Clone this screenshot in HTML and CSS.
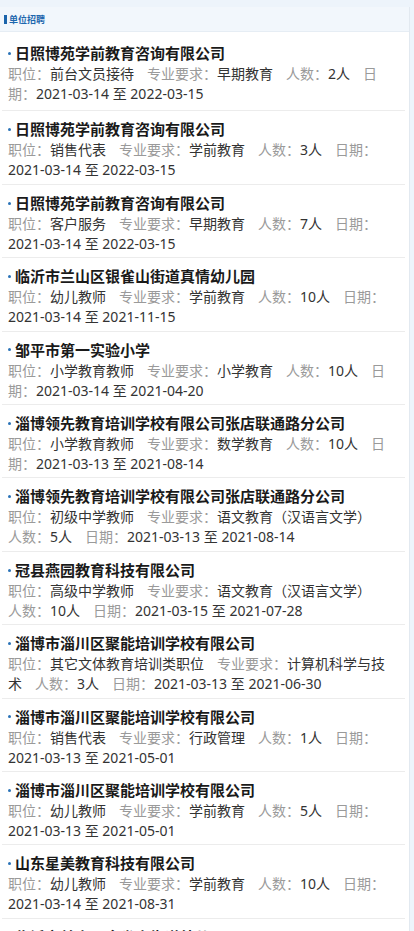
FILE: index.html
```html
<!DOCTYPE html>
<html lang="zh-CN">
<head>
    <meta charset="UTF-8">
    <meta name="viewport" content="width=device-width, initial-scale=1.0">
    <title>单位招聘</title>
    <link rel="stylesheet" href="styles.css">
</head>
<body>
    <div class="panel">
        <div class="panel-head"><span class="panel-title">单位招聘</span></div>
        <ul class="job-list">
            <li class="job">
                <h3 class="job-company"><i class="dot"></i>日照博苑学前教育咨询有限公司</h3>
                <p class="job-info"><span class="label">职位：</span><span class="value">前台文员接待</span><span class="label">专业要求：</span><span class="value">早期教育</span><span class="label">人数：</span><span class="value">2人</span><span class="label">日期：</span><span class="value">2021-03-14 至 2022-03-15</span></p>
            </li>
            <li class="job">
                <h3 class="job-company"><i class="dot"></i>日照博苑学前教育咨询有限公司</h3>
                <p class="job-info"><span class="label">职位：</span><span class="value">销售代表</span><span class="label">专业要求：</span><span class="value">学前教育</span><span class="label">人数：</span><span class="value">3人</span><span class="label">日期：</span><span class="value">2021-03-14 至 2022-03-15</span></p>
            </li>
            <li class="job">
                <h3 class="job-company"><i class="dot"></i>日照博苑学前教育咨询有限公司</h3>
                <p class="job-info"><span class="label">职位：</span><span class="value">客户服务</span><span class="label">专业要求：</span><span class="value">早期教育</span><span class="label">人数：</span><span class="value">7人</span><span class="label">日期：</span><span class="value">2021-03-14 至 2022-03-15</span></p>
            </li>
            <li class="job">
                <h3 class="job-company"><i class="dot"></i>临沂市兰山区银雀山街道真情幼儿园</h3>
                <p class="job-info"><span class="label">职位：</span><span class="value">幼儿教师</span><span class="label">专业要求：</span><span class="value">学前教育</span><span class="label">人数：</span><span class="value">10人</span><span class="label">日期：</span><span class="value">2021-03-14 至 2021-11-15</span></p>
            </li>
            <li class="job">
                <h3 class="job-company"><i class="dot"></i>邹平市第一实验小学</h3>
                <p class="job-info"><span class="label">职位：</span><span class="value">小学教育教师</span><span class="label">专业要求：</span><span class="value">小学教育</span><span class="label">人数：</span><span class="value">10人</span><span class="label">日期：</span><span class="value">2021-03-14 至 2021-04-20</span></p>
            </li>
            <li class="job">
                <h3 class="job-company"><i class="dot"></i>淄博领先教育培训学校有限公司张店联通路分公司</h3>
                <p class="job-info"><span class="label">职位：</span><span class="value">小学教育教师</span><span class="label">专业要求：</span><span class="value">数学教育</span><span class="label">人数：</span><span class="value">10人</span><span class="label">日期：</span><span class="value">2021-03-13 至 2021-08-14</span></p>
            </li>
            <li class="job">
                <h3 class="job-company"><i class="dot"></i>淄博领先教育培训学校有限公司张店联通路分公司</h3>
                <p class="job-info"><span class="label">职位：</span><span class="value">初级中学教师</span><span class="label">专业要求：</span><span class="value">语文教育（汉语言文学）</span><span class="label">人数：</span><span class="value">5人</span><span class="label">日期：</span><span class="value">2021-03-13 至 2021-08-14</span></p>
            </li>
            <li class="job">
                <h3 class="job-company"><i class="dot"></i>冠县燕园教育科技有限公司</h3>
                <p class="job-info"><span class="label">职位：</span><span class="value">高级中学教师</span><span class="label">专业要求：</span><span class="value">语文教育（汉语言文学）</span><span class="label">人数：</span><span class="value">10人</span><span class="label">日期：</span><span class="value">2021-03-15 至 2021-07-28</span></p>
            </li>
            <li class="job">
                <h3 class="job-company"><i class="dot"></i>淄博市淄川区聚能培训学校有限公司</h3>
                <p class="job-info"><span class="label">职位：</span><span class="value">其它文体教育培训类职位</span><span class="label">专业要求：</span><span class="value">计算机科学与技术</span><span class="label">人数：</span><span class="value">3人</span><span class="label">日期：</span><span class="value">2021-03-13 至 2021-06-30</span></p>
            </li>
            <li class="job">
                <h3 class="job-company"><i class="dot"></i>淄博市淄川区聚能培训学校有限公司</h3>
                <p class="job-info"><span class="label">职位：</span><span class="value">销售代表</span><span class="label">专业要求：</span><span class="value">行政管理</span><span class="label">人数：</span><span class="value">1人</span><span class="label">日期：</span><span class="value">2021-03-13 至 2021-05-01</span></p>
            </li>
            <li class="job">
                <h3 class="job-company"><i class="dot"></i>淄博市淄川区聚能培训学校有限公司</h3>
                <p class="job-info"><span class="label">职位：</span><span class="value">幼儿教师</span><span class="label">专业要求：</span><span class="value">学前教育</span><span class="label">人数：</span><span class="value">5人</span><span class="label">日期：</span><span class="value">2021-03-13 至 2021-05-01</span></p>
            </li>
            <li class="job">
                <h3 class="job-company"><i class="dot"></i>山东星美教育科技有限公司</h3>
                <p class="job-info"><span class="label">职位：</span><span class="value">幼儿教师</span><span class="label">专业要求：</span><span class="value">学前教育</span><span class="label">人数：</span><span class="value">10人</span><span class="label">日期：</span><span class="value">2021-03-14 至 2021-08-31</span></p>
            </li>
            <li class="job">
                <h3 class="job-company"><i class="dot"></i>临沂市兰山区金雀山街道幼儿园</h3>
                <p class="job-info"><span class="label">职位：</span><span class="value">幼儿教师</span><span class="label">专业要求：</span><span class="value">学前教育</span><span class="label">人数：</span><span class="value">4人</span><span class="label">日期：</span><span class="value">2021-03-14 至 2021-08-31</span></p>
            </li>
        </ul>
    </div>
</body>
</html>
```

FILE: styles.css
```css
* {
    margin: 0;
    padding: 0;
    box-sizing: border-box;
}

body {
    background: #edf4fb;
    font-family: "Noto Sans", "Noto Sans CJK SC", sans-serif;
    color: #333;
    padding-top: 7px;
}

.panel {
    width: 410px;
    background: #fff;
    border-right: 1px solid #e2e9f0;
}

.panel-head {
    height: 25px;
    display: flex;
    align-items: center;
    padding-left: 4px;
    background: #f2f7fc;
    border-bottom: 1px solid #e6edf4;
}

.panel-head::before {
    content: "";
    width: 3px;
    height: 9px;
    background: #1b64ab;
    margin-right: 2px;
}

.panel-title {
    font-size: 9px;
    font-weight: bold;
    color: #1d67ae;
}

.job-list {
    list-style: none;
    padding: 3px 4px 0 2px;
}

.job {
    padding: 7px 16px 3.4px 6px;
    border-bottom: 1px solid #ececec;
}

.job:first-child {
    padding-bottom: 6.4px;
}

.job-company {
    font-size: 15px;
    line-height: 22px;
    font-weight: bold;
    color: #1a1a1a;
}

.dot {
    display: inline-block;
    width: 3px;
    height: 3px;
    border-radius: 50%;
    background: #2a73b8;
    vertical-align: middle;
    margin: 0 4px 3px 0;
}

.job-info {
    font-size: 14px;
    line-height: 20px;
}

.label {
    color: #9a9a9a;
}

.value {
    color: #333;
    margin-right: 13px;
}
```
